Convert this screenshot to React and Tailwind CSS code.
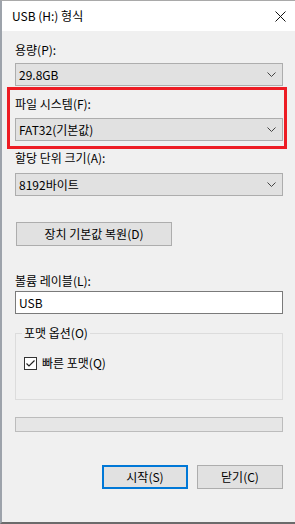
import { useState } from "react";

const font = { fontFamily: '"Segoe UI", "Noto Sans CJK KR", "Noto Sans", sans-serif' };

function Chevron() {
  return (
    <svg width="9" height="5" viewBox="0 0 9 5" className="shrink-0 mr-[1px]">
      <path d="M0.5 0.5 L4.5 4.5 L8.5 0.5" fill="none" stroke="#444" strokeWidth="1" />
    </svg>
  );
}

function Combo({ value }) {
  return (
    <div className="h-[23px] bg-[#e1e1e1] border border-[#adadad] flex items-center justify-between pl-[3px] pr-[5px] text-[12px] leading-4 text-black">
      <span>{value}</span>
      <Chevron />
    </div>
  );
}

export default function App() {
  const [quick, setQuick] = useState(true);

  return (
    <div
      className="w-[295px] h-[524px] bg-[#f0f0f0] border-l-2 border-t border-b-2 border-l-[#9da3ab] border-t-[#a9a9a9] border-b-[#6b6b6b] flex flex-col text-black text-[12px] leading-4"
      style={font}
    >
      {/* Title bar */}
      <div className="h-[30px] bg-white flex items-center justify-between pl-[10px] pr-[9px]">
        <span className="text-[12px]">USB (H:) 형식</span>
        <svg width="11" height="11" viewBox="0 0 11 11">
          <path d="M0.5 0.5 L10.5 10.5 M10.5 0.5 L0.5 10.5" stroke="#111" strokeWidth="1" />
        </svg>
      </div>

      {/* Body */}
      <div className="flex flex-col pl-[13px] pr-[12px]">
        <div className="mt-[11px] h-4">용량(P):</div>
        <div className="mt-[5px]">
          <Combo value="29.8GB" />
        </div>

        {/* Highlighted file system */}
        <div className="-ml-[8px] -mr-[4px] mt-[1px] border-[3px] border-[#ed1c24] pl-[5px] pr-[1px] pb-[5px]">
          <div className="mt-[6px] h-4">파일 시스템(F):</div>
          <div className="mt-[6px]">
            <Combo value="FAT32(기본값)" />
          </div>
        </div>

        <div className="mt-[1px] h-4">할당 단위 크기(A):</div>
        <div className="mt-[7px]">
          <Combo value="8192바이트" />
        </div>

        <button className="mt-[26px] ml-[1px] w-[156px] h-[24px] bg-[#e1e1e1] border border-[#adadad] text-[12px] leading-4 flex items-center justify-center">
          장치 기본값 복원(D)
        </button>

        <div className="mt-[27px] h-4">볼륨 레이블(L):</div>
        <div className="mt-[2px] h-[23px] bg-white border border-[#7a7a7a] flex items-center pl-[3px]">
          USB
        </div>

        <fieldset className="mt-[11px] h-[75px] border border-[#dcdcdc] px-[8px]">
          <legend className="ml-[-2px] px-[2px] h-4">포맷 옵션(O)</legend>
          <label className="mt-[14px] flex items-center gap-[5px] w-fit">
            <span
              className="w-[13px] h-[13px] border border-[#333] bg-white flex items-center justify-center"
              onClick={() => setQuick(!quick)}
            >
              {quick && (
                <svg width="11" height="11" viewBox="0 0 11 11">
                  <path d="M1.5 5.5 L4 8 L9.5 2.5" fill="none" stroke="#222" strokeWidth="1.2" />
                </svg>
              )}
            </span>
            <span>빠른 포맷(Q)</span>
          </label>
        </fieldset>

        <div className="mt-[17px] h-[15px] bg-[#e6e6e6] border border-[#bcbcbc]" />

        <div className="mt-[33px] flex justify-end gap-[9px]">
          <button className="w-[86px] h-[24px] bg-[#e1e1e1] border-2 border-[#0078d7] text-[12px] leading-4">
            시작(S)
          </button>
          <button className="w-[86px] h-[24px] bg-[#e1e1e1] border border-[#adadad] text-[12px] leading-4">
            닫기(C)
          </button>
        </div>
      </div>
    </div>
  );
}
